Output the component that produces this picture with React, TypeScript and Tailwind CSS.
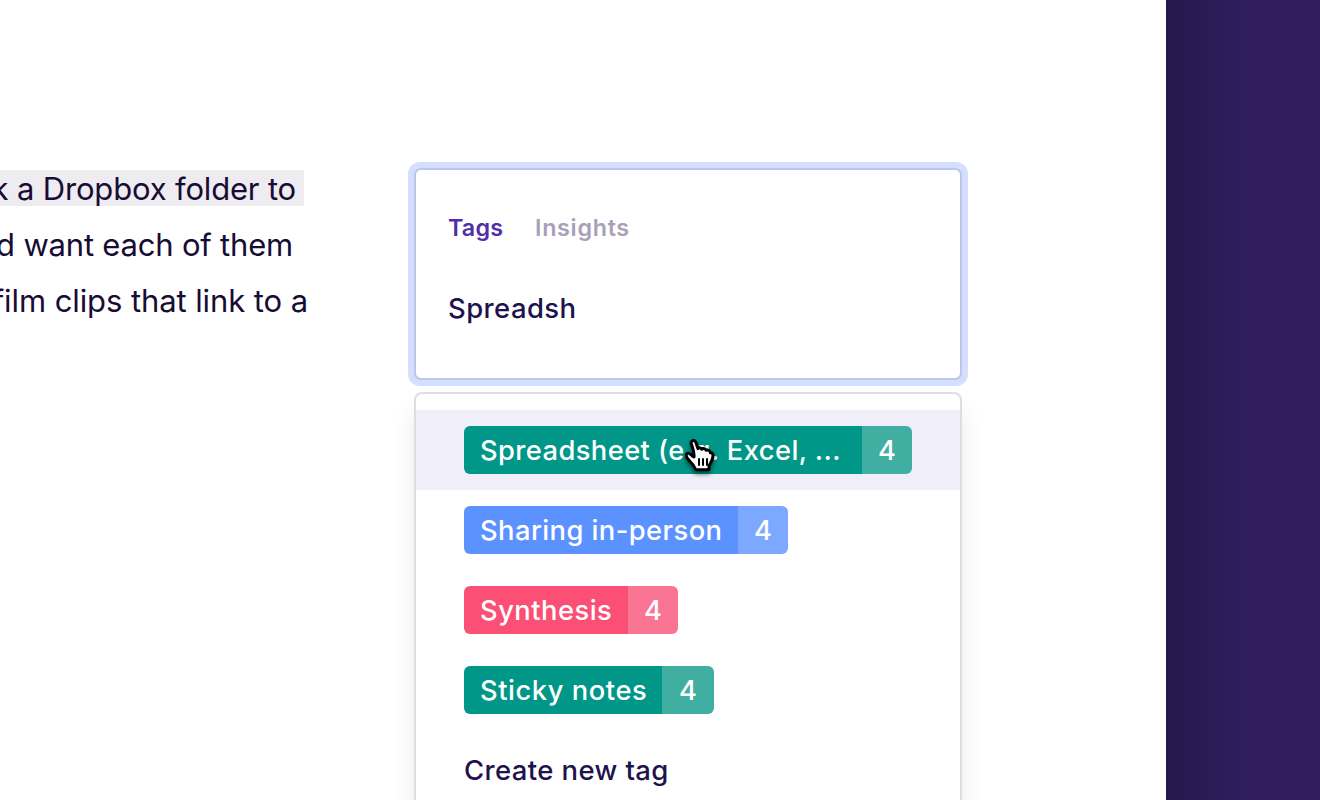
type Tag = { label: string; base: string; count: string; labelWidth: string; countWidth: string; spacing: string; active?: boolean };

const tags: Tag[] = [
  { label: "Spreadsheet (e.g. Excel, ...", base: "bg-[#009688]", count: "bg-[#40aea0]", labelWidth: "w-[398px]", countWidth: "w-[50px]", spacing: "tracking-[0.42px]", active: true },
  { label: "Sharing in-person", base: "bg-[#5c92ff]", count: "bg-[#7da8ff]", labelWidth: "w-[274px]", countWidth: "w-[50px]", spacing: "tracking-[0.44px]" },
  { label: "Synthesis", base: "bg-[#fb4f76]", count: "bg-[#fa7493]", labelWidth: "w-[164px]", countWidth: "w-[50px]", spacing: "tracking-[0.5px]" },
  { label: "Sticky notes", base: "bg-[#009688]", count: "bg-[#40aea0]", labelWidth: "w-[198px]", countWidth: "w-[52px]", spacing: "tracking-[0.56px]" },
];

function Pointer() {
  return (
    <svg className="absolute left-[254px] top-[15px] h-[60px] w-[60px] overflow-visible drop-shadow-[0_3px_2px_rgba(0,0,0,0.5)]" viewBox="0 0 180 180" fill="none">
      <path
        d="M64 57C61 46 74 43 78 53L84 71C87 67 92 68 95 73C99 69 107 71 109 76C115 74 120 77 121 83C129 83 130 89 128 98C126 109 119 117 117 124V131Q117 134 114 134H79Q76 134 75 130C71 119 63 112 57 106C51 99 46 92 50 87C55 82 62 87 66 92L72 96C74 83 68 70 64 57Z"
        fill="white"
        stroke="black"
        strokeWidth="9"
        strokeLinejoin="round"
      />
      <path d="M87 100V122M99 100V122M111 100V122" stroke="black" strokeWidth="6" />
    </svg>
  );
}

export default function App() {
  return (
    <div className="flex h-[800px] w-[1320px] overflow-hidden bg-white font-['Inter','Liberation_Sans',sans-serif]">
      <div className="w-[408px] shrink-0 overflow-hidden pt-[160px] text-[31px] leading-[56px] whitespace-nowrap text-[#170c33]">
        <p className="flex h-[57px] w-[304px] items-start justify-end pt-[10px]">
          <span className="h-9 bg-[#eeebf1] pr-[8px] pl-10 leading-[38px] tracking-[-0.17px]">k a Dropbox folder to</span>
        </p>
        <p className="flex w-[293px] justify-end tracking-[-0.2px]">d want each of them</p>
        <p className="flex w-[308px] justify-end tracking-[-0.09px]">film clips that link to a</p>
      </div>

      <div className="w-[560px] shrink-0 pt-[162px]">
        <section className="h-[224px] rounded-[12px] bg-[#d4defe] p-[6px]">
          <div className="h-[212px] rounded-[7px] border-2 border-[#bbc6ea] bg-white px-8 pt-[42px]">
            <nav className="flex h-8 items-center gap-8 text-[23.3px] leading-8">
              <span className="w-[55px] font-semibold tracking-[0.2px] whitespace-nowrap text-[#512da8]">Tags</span>
              <span className="font-[560] tracking-[0.7px] text-[#a8a0ba]">Insights</span>
            </nav>
            <p className="mt-[44px] text-[27.5px] leading-10 font-medium tracking-[0.4px] text-[#20124d]">Spreadsh</p>
          </div>
        </section>

        <section className="mx-[6px] mt-[6px] h-[440px] rounded-[8px] border-2 border-[#dedde4] bg-white pt-4 shadow-[0_20px_24px_rgba(0,0,0,0.09)]">
          {tags.map((tag) => (
            <div key={tag.label} className={tag.active ? "relative flex h-20 items-center bg-[#f0eef8] pl-12" : "flex h-20 items-center pl-12"}>
              <div className="flex h-12 overflow-hidden rounded-[6px] text-[27.3px] leading-[49px] font-[480] whitespace-nowrap text-white">
                <span className={`${tag.base} ${tag.labelWidth} ${tag.spacing} pl-4`}>{tag.label}</span>
                <span className={`${tag.count} ${tag.countWidth} text-center`}>4</span>
              </div>
              {tag.active && <Pointer />}
            </div>
          ))}
          <p className="pl-12 text-[27.5px] leading-[80px] font-[480] tracking-[0.38px] text-[#20124d]">Create new tag</p>
        </section>
      </div>

      <aside className="ml-auto w-[154px] bg-linear-to-r from-[#25184a] via-[#2d1d5b] via-40% to-[#321d60] to-60%" />
    </div>
  );
}
